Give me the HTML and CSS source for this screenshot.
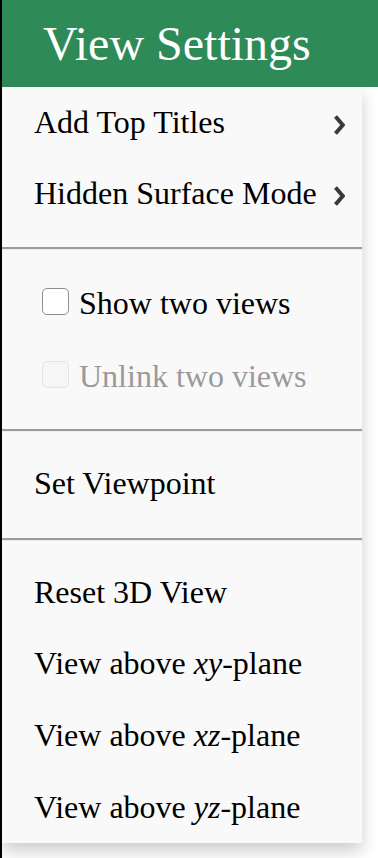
FILE: index.html
```html
<!DOCTYPE html>
<html lang="en">
<head>
<meta charset="utf-8">
<title>View Settings</title>
<link rel="stylesheet" href="styles.css">
</head>
<body>
<div class="page">
  <header class="header">View Settings</header>
  <nav class="panel">
    <div class="group">
      <div class="item sub"><span>Add Top Titles</span><svg class="chev" viewBox="0 0 12 22" width="12" height="22"><path d="M2.5 2.5 L9.8 11 L2.5 19.5" /></svg></div>
      <div class="item sub"><span>Hidden Surface Mode</span><svg class="chev" viewBox="0 0 12 22" width="12" height="22"><path d="M2.5 2.5 L9.8 11 L2.5 19.5" /></svg></div>
    </div>
    <hr class="divider">
    <div class="group">
      <label class="item check"><input type="checkbox" class="box"><span>Show two views</span></label>
      <label class="item check disabled"><input type="checkbox" class="box" disabled><span>Unlink two views</span></label>
    </div>
    <hr class="divider">
    <div class="group">
      <div class="item">Set Viewpoint</div>
    </div>
    <hr class="divider">
    <div class="group">
      <div class="item">Reset 3D View</div>
      <div class="item wide">View above <i>xy</i>-plane</div>
      <div class="item wide">View above <i>xz</i>-plane</div>
      <div class="item wide">View above <i>yz</i>-plane</div>
    </div>
  </nav>
</div>
</body>
</html>
```

FILE: styles.css
```css
html, body {
  margin: 0;
  padding: 0;
  background: #ffffff;
}

body {
  font-family: "Liberation Serif", "Times New Roman", serif;
  color: #000;
  overflow: hidden;
}

.page {
  border-left: 2px solid #000;
  min-height: 858px;
  box-sizing: border-box;
}

.header {
  background: #2e8b57;
  color: #fff;
  height: 87px;
  line-height: 88px;
  font-size: 48px;
  padding-left: 41px;
}

.panel {
  width: 360px;
  background: #f9f9f9;
  box-shadow: 0 8px 16px 0 rgba(0, 0, 0, 0.2);
}

.group {
  display: flex;
  flex-direction: column;
}

.item {
  height: 71px;
  line-height: 71px;
  font-size: 32px;
  padding-left: 32px;
  padding-right: 17px;
  white-space: nowrap;
}

.group:last-child .item {
  height: 72px;
  line-height: 72px;
}

.group:last-child .item:first-child {
  height: 70px;
  line-height: 70px;
}

.item i {
  font-style: italic;
}

.sub {
  display: flex;
  align-items: center;
  justify-content: space-between;
}

.chev {
  fill: none;
  stroke: #3a3a3a;
  stroke-width: 4;
  stroke-linecap: butt;
  stroke-linejoin: miter;
  margin-top: 5px;
}

.check {
  display: flex;
  align-items: center;
  height: 73px;
  line-height: 73px;
}

.box {
  appearance: none;
  -webkit-appearance: none;
  width: 27px;
  height: 27px;
  margin: -4px 10px 0 8px;
  border: 1.5px solid #8e8e8e;
  border-radius: 5px;
  background: #ffffff;
  box-sizing: border-box;
  flex: none;
}

.disabled {
  color: #9a9a9a;
}

.disabled .box {
  border-color: #e4e4e4;
  background: #f6f6f6;
}

.divider {
  margin: 0;
  height: 0;
  border: none;
  border-top: 2px solid #9c9c9c;
  border-bottom: 1px solid #ececec;
}

.group:nth-of-type(1) + .divider { margin-top: 18px; margin-bottom: 17px; }
.panel > .divider:nth-of-type(2) { margin-top: 16px; margin-bottom: 16px; }
.panel > .divider:nth-of-type(3) { margin-top: 19px; margin-bottom: 16px; }
```
